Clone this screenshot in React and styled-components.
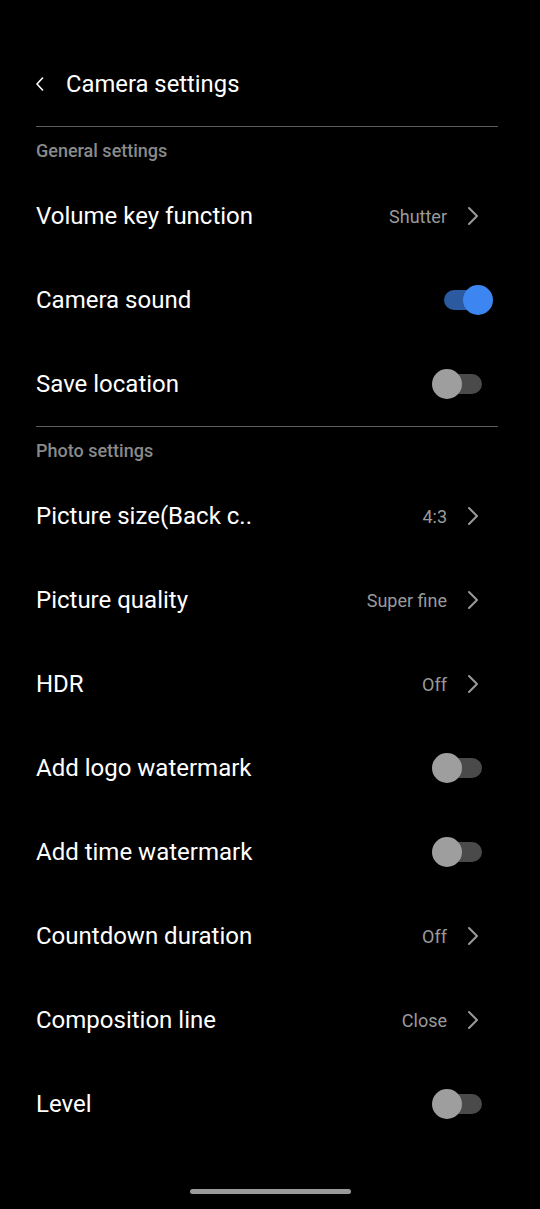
import React from "react";
import styled, { createGlobalStyle } from "styled-components";

const GlobalStyle = createGlobalStyle`
  html, body {
    margin: 0;
    padding: 0;
    background: #000;
  }
  body {
    font-family: Roboto, "Noto Sans", "Liberation Sans", sans-serif;
    color: #fff;
  }
`;

const Page = styled.div`
  width: 540px;
  min-height: 1209px;
  background: #000;
  box-sizing: border-box;
  padding: 0 42px 0 36px;
  display: flex;
  flex-direction: column;
`;

const Header = styled.header`
  height: 48px;
  margin-top: 60px;
  padding-bottom: 18px;
  display: flex;
  align-items: center;
  gap: 22px;
  border-bottom: 1px solid #5e5e5e;
`;

const BackButton = styled.button`
  background: none;
  border: 0;
  padding: 0;
  width: 8px;
  height: 14px;
  display: flex;
  align-items: center;
  cursor: pointer;
`;

const Title = styled.h1`
  margin: 0;
  font-size: 23.8px;
  font-weight: 400;
  color: #fff;
`;

const Section = styled.section`
  display: flex;
  flex-direction: column;
  border-bottom: ${(p) => (p.divider ? "1px solid #5e5e5e" : "none")};
`;

const SectionLabel = styled.div`
  height: 47px;
  display: flex;
  align-items: center;
  font-size: 18px;
  font-weight: 500;
  color: #8a8a8a;
`;

const Row = styled.div`
  height: 84px;
  display: flex;
  align-items: center;
  justify-content: space-between;
`;

const Label = styled.span`
  font-size: 24px;
  font-weight: 400;
  color: #fff;
`;

const Trail = styled.div`
  display: flex;
  align-items: center;
  gap: 20px;
  margin-right: ${(p) => (p.toggle ? "5px" : "19px")};
`;

const Value = styled.span`
  font-size: 18px;
  color: #9a9a9a;
`;

const Switch = styled.div`
  position: relative;
  width: 61px;
  height: 30px;
  display: flex;
  align-items: center;
`;

const Track = styled.div`
  margin: ${(p) => (p.on ? "0 8px 0 12px" : "0 11px 0 5px")};
  flex: 1;
  height: 20px;
  border-radius: 10px;
  background: ${(p) => (p.on ? "#2b5aa0" : "#4a4a4a")};
`;

const Thumb = styled.div`
  position: absolute;
  top: 0;
  left: ${(p) => (p.on ? "31px" : "0")};
  width: 30px;
  height: 30px;
  border-radius: 50%;
  background: ${(p) => (p.on ? "#3d85f0" : "#9e9e9e")};
`;

const Footer = styled.div`
  margin-top: auto;
  display: flex;
  justify-content: center;
  padding-bottom: 15px;
  margin-left: -36px;
  margin-right: -42px;
`;

const HomeBar = styled.div`
  width: 161px;
  height: 5px;
  border-radius: 3px;
  background: #9a9a9a;
`;

const Chevron = () => (
  <svg width="12" height="20" viewBox="0 0 12 20">
    <path
      d="M2 2 L10 10 L2 18"
      fill="none"
      stroke="#9a9a9a"
      strokeWidth="2"
      strokeLinecap="round"
      strokeLinejoin="round"
    />
  </svg>
);

const Toggle = ({ on }) => (
  <Switch>
    <Track on={on} />
    <Thumb on={on} />
  </Switch>
);

const SettingRow = ({ label, value, toggle, on }) => (
  <Row>
    <Label>{label}</Label>
    {toggle ? (
      <Trail toggle>
        <Toggle on={on} />
      </Trail>
    ) : (
      <Trail>
        <Value>{value}</Value>
        <Chevron />
      </Trail>
    )}
  </Row>
);

const general = [
  { label: "Volume key function", value: "Shutter" },
  { label: "Camera sound", toggle: true, on: true },
  { label: "Save location", toggle: true, on: false },
];

const photo = [
  { label: "Picture size(Back c..", value: "4:3" },
  { label: "Picture quality", value: "Super fine" },
  { label: "HDR", value: "Off" },
  { label: "Add logo watermark", toggle: true, on: false },
  { label: "Add time watermark", toggle: true, on: false },
  { label: "Countdown duration", value: "Off" },
  { label: "Composition line", value: "Close" },
  { label: "Level", toggle: true, on: false },
];

export default function App() {
  return (
    <>
      <GlobalStyle />
      <Page>
        <Header>
          <BackButton aria-label="Back">
            <svg width="8" height="14" viewBox="0 0 8 14">
              <path
                d="M6.5 1 L1 7 L6.5 13"
                fill="none"
                stroke="#fff"
                strokeWidth="1.6"
                strokeLinecap="round"
                strokeLinejoin="round"
              />
            </svg>
          </BackButton>
          <Title>Camera settings</Title>
        </Header>
        <Section divider>
          <SectionLabel>General settings</SectionLabel>
          {general.map((r) => (
            <SettingRow key={r.label} {...r} />
          ))}
        </Section>
        <Section>
          <SectionLabel>Photo settings</SectionLabel>
          {photo.map((r) => (
            <SettingRow key={r.label} {...r} />
          ))}
        </Section>
        <Footer>
          <HomeBar />
        </Footer>
      </Page>
    </>
  );
}
